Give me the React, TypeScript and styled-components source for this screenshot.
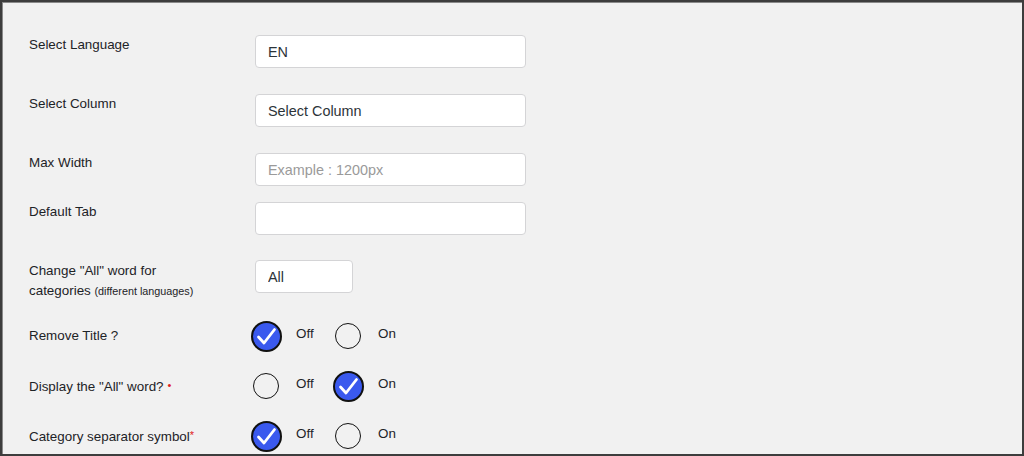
import React from "react";
import styled, { createGlobalStyle } from "styled-components";

const Global = createGlobalStyle`
  html, body { margin: 0; padding: 0; background: #f1f1f1; }
  body { font-family: "Liberation Sans", Arial, sans-serif; }
  * { box-sizing: border-box; }
`;

const Frame = styled.div`
  width: 1024px;
  height: 456px;
  border: 2px solid #3d3d3d;
  box-shadow: inset 1px 1px 0 #8a8a8a;
  background: #f1f1f1;
  padding: 33px 0 0 27px;
  overflow: hidden;
  display: flex;
  flex-direction: column;
`;

const Row = styled.div<{ $h: number; $center?: boolean }>`
  display: grid;
  grid-template-columns: 226px 1fr;
  height: ${(p) => p.$h}px;
  flex: none;
  align-items: ${(p) => (p.$center ? "center" : "start")};
`;

const Label = styled.div<{ $top?: number }>`
  font-size: 13.4px;
  line-height: 20px;
  color: #1d2327;
  padding-top: ${(p) => p.$top ?? 0}px;
`;

const Small = styled.span`
  font-size: 10.8px;
`;

const Req = styled.span<{ $space?: boolean }>`
  color: #e02020;
  font-size: 11px;
  vertical-align: 2px;
  margin-left: ${(p) => (p.$space ? "4px" : "0")};
`;

const Input = styled.input<{ $w: number }>`
  width: ${(p) => p.$w}px;
  height: 33px;
  border: 1px solid #d4d4d6;
  border-radius: 4px;
  background: #fff;
  padding: 0 12px;
  font-family: "Liberation Sans", Arial, sans-serif;
  font-size: 14.4px;
  color: #2c3338;
  outline: none;
  &::placeholder { color: #9a9a9a; }
`;

const Options = styled.div`
  display: flex;
  align-items: center;
  margin-left: -4px;
`;

const Option = styled.div`
  display: flex;
  align-items: center;
  width: 82px;
  gap: 15px;
`;

const Slot = styled.div`
  width: 30px;
  height: 31px;
  display: flex;
  align-items: center;
  justify-content: center;
`;

const Circle = styled.div<{ $on: boolean }>`
  width: ${(p) => (p.$on ? 31 : 26)}px;
  height: ${(p) => (p.$on ? 31 : 26)}px;
  flex: none;
  border-radius: 50%;
  border: ${(p) => (p.$on ? 2 : 1.5)}px solid #111;
  background: ${(p) => (p.$on ? "#3a59ee" : "transparent")};
  display: flex;
  align-items: center;
  justify-content: center;
`;

const OptText = styled.span`
  font-size: 13.4px;
  color: #1d2327;
  margin-bottom: 6px;
`;

const Check = () => (
  <svg width="27" height="27" viewBox="0 0 27 27">
    <path d="M5.5 14 L11 20 L21.5 6.5" fill="none" stroke="#fff" strokeWidth="2.8" strokeLinecap="round" strokeLinejoin="round" />
  </svg>
);

const Radio = ({ on, label }: { on: boolean; label: string }) => (
  <Option>
    <Slot>
      <Circle $on={on}>{on && <Check />}</Circle>
    </Slot>
    <OptText>{label}</OptText>
  </Option>
);

const Toggle = ({ value }: { value: "off" | "on" }) => (
  <Options>
    <Radio on={value === "off"} label="Off" />
    <Radio on={value === "on"} label="On" />
  </Options>
);

export default function App() {
  return (
    <>
      <Global />
      <Frame>
        <Row $h={59}>
          <Label $top={0}>Select Language</Label>
          <Input $w={271} defaultValue="EN" />
        </Row>
        <Row $h={59}>
          <Label $top={0}>Select Column</Label>
          <Input $w={271} defaultValue="Select Column" />
        </Row>
        <Row $h={49}>
          <Label $top={0}>Max Width</Label>
          <Input $w={271} placeholder="Example : 1200px" />
        </Row>
        <Row $h={58}>
          <Label $top={0}>Default Tab</Label>
          <Input $w={271} />
        </Row>
        <Row $h={51}>
          <Label $top={1}>
            Change "All" word for
            <br />
            categories <Small>(different languages)</Small>
          </Label>
          <Input $w={98} defaultValue="All" />
        </Row>
        <Row $h={50} $center>
          <Label>Remove Title ?</Label>
          <Toggle value="off" />
        </Row>
        <Row $h={50} $center>
          <Label>
            Display the "All" word?<Req $space>•</Req>
          </Label>
          <Toggle value="on" />
        </Row>
        <Row $h={50} $center>
          <Label>
            Category separator symbol<Req>*</Req>
          </Label>
          <Toggle value="off" />
        </Row>
      </Frame>
    </>
  );
}
